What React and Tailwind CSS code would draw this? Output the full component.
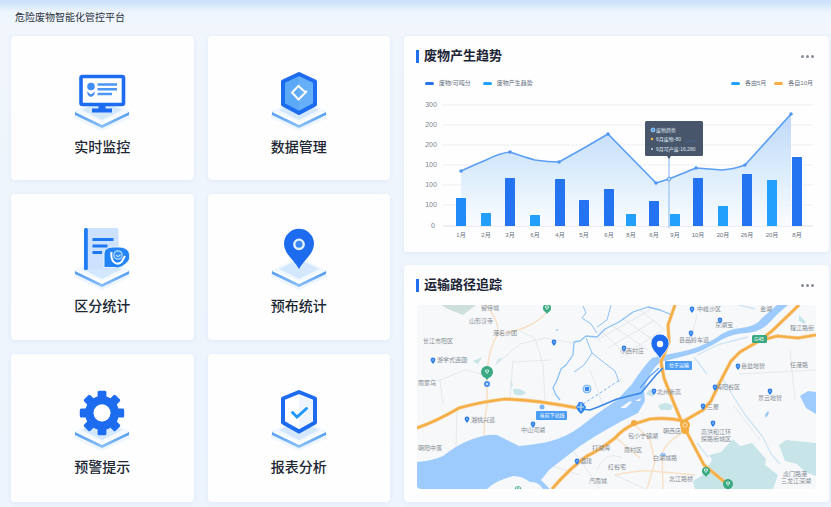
import React from "react";

const Platform = () => (
    <g>
        <path d="M4 44 L32 34 L60 44 V49 L32 62 L4 49 Z" fill="#edf6ff" />
        <path d="M5 43 L32 30 L59 43 V46 L32 59 L5 46 Z" fill="url(#edge)" />
        <path d="M5 43 L32 30 L59 43 L32 56 Z" fill="#ffffff" />
        <path d="M5 42 L32 29 L59 42 L32 53 Z" fill="#f1f8ff" />
        <path d="M12 41 L32 31 L52 41 L32 51 Z" fill="#d3e8fd" />
    </g>
);

const MonitorIcon = () => (
    <g>
        <rect x="11" y="7.5" width="42.5" height="28" rx="1.5" fill="#fff" stroke="#1d6cf0" strokeWidth="3.6" />
        <path d="M28.5 36 H35.5 V39.5 H42 V43.5 H22 V39.5 H28.5 Z" fill="#1d6cf0" />
        <circle cx="21" cy="17.5" r="3.8" fill="#3f8df5" />
        <path d="M17 22.5 L21 25.5 L25 22.5 Q24.5 27 21 28 Q17.5 27 17 22.5 Z" fill="#3f8df5" />
        <path d="M27.5 15.5 H47 M27.5 20.3 H47 M27.5 25 H42" stroke="#4c97f6" strokeWidth="2.4" />
    </g>
);

const HexagonIcon = () => (
    <g>
        <path d="M32 5 L48 12.5 V35.5 L32 44 L16 35.5 V12.5 Z" fill="#5ca9f8" stroke="#1d6cf0" strokeWidth="4" strokeLinejoin="round" />
        <path d="M32 7 L46 14 V34 L32 41.5 Z" fill="#78bafb" opacity=".35" />
        <path d="M31.5 17 L38.5 23.5 L31.5 30.5 L25 23.5 Z" fill="none" stroke="#fff" strokeWidth="2" />
        <path d="M38 23.5 L40 22" stroke="#fff" strokeWidth="2" />
    </g>
);

const ReportIcon = () => (
    <g>
        <path d="M16 0 H46.5 Q48.5 0 48.5 2 V41.5 H16 Z" fill="#cbe1fd" />
        <rect x="14" y="0" width="3.8" height="42" rx="1.5" fill="#1f7cf3" />
        <path d="M22.5 11.5 H43.5 M22.5 18 H37.5 M22.5 24.5 H32" stroke="#1f78f2" strokeWidth="2.8" />
        <path d="M34 39.5 V25 Q35 19 43 19 H50 Q58.5 20 59.5 26 V31 Q58 35 52 38.5 L48 40 L44 39.5 Z" fill="#2183f5" stroke="#e6f2ff" strokeWidth="1" />
        <path d="M41.5 24 Q40.5 31 44.5 34.5 Q48 37 51.5 34 L55 28" fill="none" stroke="#fff" strokeWidth="2" />
        <circle cx="48" cy="27" r="4.2" fill="#2f90f7" stroke="#bddcff" strokeWidth="1.2" />
        <path d="M46 27 Q48 30 50.5 26.5" fill="none" stroke="#cfe5ff" strokeWidth="1.2" />
    </g>
);

const PinIcon = () => (
    <g>
        <path d="M32 41 C28 33 17 26 17 15.8 A15 15 0 0 1 47 15.8 C47 26 36 33 32 41 Z" fill="#1d6cf0" />
        <circle cx="32" cy="16.3" r="4.7" fill="#3b8af6" stroke="#e4f1ff" strokeWidth="2.4" />
    </g>
);

const GearIcon = () => (
    <g fill="#1d6cf0">
        {[0, 45, 90, 135, 180, 225, 270, 315].map((angle) => (
            <rect key={angle} x="27.6" y="1.8" width="8.8" height="10" rx="1.5" transform={`rotate(${angle} 32 24)`} />
        ))}
        <circle cx="32" cy="24" r="12.7" fill="none" stroke="#1d6cf0" strokeWidth="8.6" />
        <circle cx="32" cy="24" r="8.4" fill="#ffffff" />
    </g>
);

const ShieldIcon = () => (
    <g>
        <path d="M32 3 L48 9.5 V33.5 L32 42.5 L16 33.5 V9.5 Z" fill="#ffffff" stroke="#1d6cf0" strokeWidth="4" strokeLinejoin="round" />
        <path d="M32 6 L46 11.5 V32 L32 40 Z" fill="#eef5fe" />
        <path d="M25.5 23.5 L30 28 L39.5 19.5" fill="none" stroke="#1f97fb" strokeWidth="3" strokeLinecap="round" />
    </g>
);

const modules = [
    { title: "实时监控", Icon: MonitorIcon },
    { title: "数据管理", Icon: HexagonIcon },
    { title: "区分统计", Icon: ReportIcon },
    { title: "预布统计", Icon: PinIcon },
    { title: "预警提示", Icon: GearIcon },
    { title: "报表分析", Icon: ShieldIcon },
];

const DARK = "#2474f2";
const LIGHT = "#22a0fc";

const bars = [
    { x: 461, top: 198, label: "1月", color: "#218cf8" },
    { x: 486, top: 213, label: "2月", color: LIGHT },
    { x: 510, top: 178, label: "3月", color: DARK },
    { x: 535, top: 215, label: "6月", color: LIGHT },
    { x: 560, top: 179, label: "4月", color: DARK },
    { x: 584, top: 200, label: "5月", color: DARK },
    { x: 609, top: 189, label: "6月", color: DARK },
    { x: 631, top: 214, label: "8月", color: LIGHT },
    { x: 654, top: 201, label: "6月", color: DARK },
    { x: 675, top: 214, label: "9月", color: LIGHT },
    { x: 698, top: 178, label: "10月", color: DARK },
    { x: 723, top: 206, label: "20月", color: LIGHT },
    { x: 747, top: 174, label: "26月", color: DARK },
    { x: 772, top: 180, label: "20月", color: LIGHT },
    { x: 797, top: 157, label: "8月", color: DARK },
];

const axis = [
    { y: 105, label: "300" },
    { y: 125, label: "200" },
    { y: 145, label: "200" },
    { y: 165, label: "100" },
    { y: 185, label: "100" },
    { y: 205, label: "100" },
    { y: 226, label: "0" },
];

const trend = "M461 171 Q474 165 486 160 Q500 153 510 152 Q524 157 535 160 Q548 162 559 162 L584 148 L608 134 L656 183 L669 179 L696 168 Q710 169 722 170 Q735 169 745 165 L791 114";

const dots = [[461, 171], [510, 152], [559, 162], [608, 134], [656, 183], [696, 168], [745, 165], [791, 114]];

const TrendChart = () => (
    <svg viewBox="404 97 425 147" className="block h-auto w-full" role="img" aria-label="废物产生趋势">
        <defs>
            <linearGradient id="area" x1="0" y1="0" x2="0" y2="1">
                <stop offset="0" stopColor="#b9d4f8" />
                <stop offset="0.45" stopColor="#d3e8fb" />
                <stop offset="1" stopColor="#fafcff" />
            </linearGradient>
        </defs>
        {axis.map(({ y, label }) => (
            <g key={y}>
                <line x1="443" x2="813" y1={y} y2={y} stroke={label === "0" ? "#d9dee6" : "#e6eaf0"} strokeDasharray={label === "0" ? "none" : "3 1"} />
                <text x={label === "0" ? 433 : 431} y={y + 2} fontSize="7" textAnchor="middle" fill="#7c8490">{label}</text>
            </g>
        ))}
        <path d={`${trend} V226 H461 Z`} fill="url(#area)" opacity=".9" />
        <path d="M669 156 V228" stroke="#a6cdf8" strokeWidth="1.5" />
        <path d={trend} fill="none" stroke="#5b9ff2" strokeWidth="1.7" strokeLinejoin="round" />
        {dots.map(([x, y]) => (
            <circle key={x} cx={x} cy={y} r="1.8" fill="#5497ef" />
        ))}
        <circle cx="669" cy="179" r="1.8" fill="#cfe4fc" stroke="#5b9ff2" />
        {bars.map(({ x, top, label, color }) => (
            <g key={x}>
                <rect x={x - 5} y={top} width="10" height={226 - top} rx="0.5" fill={color} />
                <text x={x} y="237" fontSize="6" textAnchor="middle" fill="#68717e">{label}</text>
            </g>
        ))}
        <rect x="645" y="121" width="58" height="35" rx="1.5" fill="#48566b" />
        <circle cx="653" cy="130" r="2" fill="#48a4f7" stroke="#d9edff" strokeWidth=".6" />
        <circle cx="652" cy="139" r="1.3" fill="#f5b04a" />
        <circle cx="652" cy="149" r="1" fill="#cbd5e1" />
        <path d="M686 142 q5 -2 11 0" fill="none" stroke="#3e83d8" strokeDasharray="1 2" />
        <g fill="#dde4ee" fontSize="5">
            <text x="656" y="132">废物趋势</text>
            <text x="656" y="141">6月废物-80</text>
            <text x="656" y="151">9月可产废:16,280</text>
        </g>
        <path d="M667 156 H671 L669 159 Z" fill="#48566b" />
    </svg>
);

const places = [
    [481, 310, "留侍城"],
    [469, 323, "山形汉寺"],
    [493, 335, "港名沙团"],
    [423, 343, "长江市阳区"],
    [437, 362, "游学式连园"],
    [418, 385, "南家乌"],
    [471, 422, "湘桃兴道"],
    [521, 432, "中山河湖"],
    [418, 450, "朝阳中落"],
    [592, 450, "打湖海"],
    [580, 463, "酒建"],
    [589, 483, "汽南城"],
    [608, 469, "红谷宅"],
    [697, 311, "中峰沙区"],
    [760, 311, "金湖"],
    [715, 327, "东湖宝"],
    [679, 342, "县品岭车道"],
    [620, 353, "小西村庄"],
    [790, 330, "程江路街"],
    [741, 368, "嘉益地智"],
    [790, 367, "任港路"],
    [657, 394, "北州新高"],
    [716, 389, "海阳谷区"],
    [707, 409, "三屋"],
    [758, 400, "景云地智"],
    [628, 438, "包小宁镇湖"],
    [663, 433, "朝西店"],
    [701, 434, "高洪和江环"],
    [701, 441, "探路街城区"],
    [624, 452, "南村区"],
    [653, 460, "白湖城路"],
    [669, 481, "北江路桥"],
    [783, 476, "虎门路港"],
    [781, 483, "三龙江深湖"],
];

const markers = [[433, 360], [554, 342], [467, 419], [533, 424], [577, 461], [692, 309], [720, 320], [691, 333], [624, 348], [738, 366], [654, 391], [715, 387], [703, 406], [770, 391], [713, 423]];

const RouteMap = () => (
    <svg viewBox="417 305 399 184" className="block h-auto w-full rounded" role="img" aria-label="运输路径追踪">
        <rect x="417" y="305" width="399" height="184" fill="#f6f8fa" />
        {/* lakes and parks */}
        <g fill="#c7e5e9">
            <path d="M695 489 L693 481 L703 475 L712 460 L709 455 L721 452 L733 439 L740 446 L752 443 L766 459 L765 465 L778 475 L773 489 Z" />
            <path d="M779 445 L786 440 L816 443 V476 L805 472 L797 464 L785 461 Z" />
            <path d="M441 305 H476 L463 315 L448 309 Z" fill="#cddfdd" />
            <path d="M473 361 L482 357 L478 364 Z M463 356 L468 360 L464 361 Z M646 394 q4 -7 9 -3 l-2 6 z M658 406 q7 -6 15 0 l-2 4 h-10 z M496 363 q2 -5 7 -5 l-7 7 z" />
            <path d="M513 389 q8 -1 13 4 q-6 4 -12 1 z M510 381 l3 3 -2 6 z M799 315 l7 7 -2 2 -5 -3 z" />
        </g>
        {/* minor roads */}
        <g fill="none" stroke="#e5e8ec" strokeWidth="1">
            <path d="M417 381 L440 380 L465 370 L487 375 M440 380 L443 405 M457 410 L456 447 M495 365 L520 344 L545 338 L573 343 M513 360 L510 399 M520 331 L535 338 L543 365 L545 400 M513 362 L550 360" />
            <path d="M597 340 L650 310 M600 330 L630 358 M611 325 L648 350 M622 318 L660 345 M640 310 L665 330 M608 348 L655 320 M620 358 L662 330" />
            <path d="M560 435 L580 460 L600 489 M546 464 L580 475 M597 470 Q605 450 622 458 M697 315 L690 345 M739 374 L816 370 M790 350 L795 400 M615 475 L645 489 M733 405 L760 440 M590 370 L605 410" />
        </g>
        <g fill="none" stroke="#f8e1c6" strokeWidth="1.5">
            <path d="M486 305 Q499 320 498 334 Q489 347 487 372 V405 Q484 420 484 438" />
            <path d="M498 334 Q520 331 530 325 Q540 320 547 312" />
            <path d="M635 425 L650 440 L655 462 L647 489 M682 433 Q665 443 662 454 L663 489 M615 475 Q640 470 652 471 L695 475 M615 437 L640 458" />
        </g>
        {/* rivers */}
        <path d="M417 462 Q432 461 443 456 Q457 445 470 440 Q486 434 497 435 Q507 440 519 446 Q540 444 551 441 Q566 437 580 427 Q596 414 617 400 L632 384 Q643 367 652 358 Q664 355 680 352 Q700 348 716 338 Q727 329 741 328 Q757 326 762 318 L777 305 H788 Q777 314 770 322 Q761 332 747 333 Q734 333 721 340 Q702 352 688 355 Q674 359 660 362 Q648 373 644 390 L645 401 L638 413 L620 422 Q598 434 580 446 Q563 459 549 470 L541 480 L550 489 H543 Q538 481 530 482 Q522 476 514 476 Q496 480 487 489 H417 Z" fill="#9dcbfd" />
        <path d="M800 396 L808 391 L816 392 V414 L806 408 Z" fill="#9dcbfd" />
        <path d="M620 408 L630 401 L632 402 L626 408 Z M635 401 L641 398 L640 401 Z" fill="#f3f8fd" />
        <g fill="none" stroke="#8cc0f4" strokeWidth="1.3" strokeLinejoin="round">
            <path d="M672 315 L660 310 L648 307 L633 312 L619 322 L605 329 L597 337 L586 336 L580 341 L574 342 L573 355 L566 365 L561 369 L557 380 L553 388 L556 395 L560 400" />
            <path d="M583 306 L586 313 L582 318 L591 324 L597 333 M597 327 L607 320 L611 305 M586 338 L592 353 L602 361 L615 371 L619 382 M592 353 L584 365 L574 372" strokeWidth="1" />
        </g>
        <path d="M723 379 L735 399 L746 416 L763 437 L771 454 L780 464 M694 357 L707 374 M697 355 L720 344 L748 337 M697 443 L708 457 M739 305 L755 309" fill="none" stroke="#cfe4f5" strokeWidth="1.3" />
        <path d="M765 415 l3 -4 1 2 -3 5 z M555 330 l4 -1 -2 2 z M661 453 h4 l1 3 h-6 z" fill="#94c5f8" />
        {/* highways */}
        <g fill="none" stroke="#f8c888" strokeWidth="3.6" strokeLinejoin="round">
            <path d="M417 428 Q437 421 459 408 Q480 402 505 399 Q535 400 578 408" />
            <path d="M675 305 L668 325 L669 342 L661 362 L664 378 L673 401 L683 425 L704 465 L727 484" />
            <path d="M799 305 L772 331 L759 341 L740 352 L731 361 L720 382 L711 401 L703 410 L684 421 Q668 417 650 419 L634 424 Q623 429 615 438 Q600 450 587 456 Q570 468 552 489 M759 341 L777 336 L798 338 L816 335" />
        </g>
        <g fill="none" stroke="#f4ae43" strokeWidth="2.2" strokeLinejoin="round">
            <path d="M417 428 Q437 421 459 408 Q480 402 505 399 Q535 400 578 408" />
            <path d="M675 305 L668 325 L669 342 L661 362 L664 378 L673 401 L683 425 L704 465 L727 484" />
            <path d="M799 305 L772 331 L759 341 L740 352 L731 361 L720 382 L711 401 L703 410 L684 421 Q668 417 650 419 L634 424 Q623 429 615 438 Q600 450 587 456 Q570 468 552 489 M759 341 L777 336 L798 338 L816 335" />
        </g>
        <circle cx="634" cy="423" r="3" fill="#f3ab40" />
        <circle cx="685" cy="425" r="5" fill="#f3ab40" />
        <circle cx="685" cy="430" r="4" fill="#f3ab40" />
        <circle cx="685" cy="425" r="2.2" fill="none" stroke="#fde2b5" />
        {/* transport route */}
        <path d="M581 409 L590 410 L598 407 L617 399 L641 393 L656 375 L663 368" fill="none" stroke="#3b86ea" strokeWidth="1.6" />
        <path d="M640 388 L650 376 L659 368" fill="none" stroke="#5b9ff2" strokeWidth="1.2" />
        <path d="M583 404 L600 393 L621 379" fill="none" stroke="#7db6f4" strokeDasharray="3 2" />
        <circle cx="587" cy="389" r="4" fill="#c5e0fc" stroke="#79b5f5" />
        <path d="M585 391 V387 H589 V391 Z" fill="#3b8bef" />
        <path d="M576 407 l3 -5 h3 l4 5 -2 4 -3 3 -3 -3 z" fill="#2f86ef" />
        <path d="M577 407 h7 M581 403 v8" stroke="#d9ebff" />
        <circle cx="487" cy="384" r="3" fill="#4892ee" />
        <circle cx="487" cy="384" r="1" fill="#e4f1ff" />
        <circle cx="542" cy="407" r="2.5" fill="#79b5f5" />
        {markers.map(([x, y]) => (
            <g key={`${x}-${y}`}>
                <path d={`M${x - 2.4} ${y} a2.4 2.4 0 1 1 4.8 0 q-.5 2 -2.4 4 q-1.9 -2 -2.4 -4 Z`} fill="#2f7fea" />
                <circle cx={x} cy={y} r=".7" fill="#bfdcff" />
            </g>
        ))}
        {[[547, 308, 4], [487, 372, 6], [706, 471, 4], [728, 484, 5], [518, 489, 3]].map(([x, y, r]) => (
            <g key={x}>
                <path d={`M${x - r + 1} ${y + 2} L${x} ${y + r + 2} L${x + r - 1} ${y + 2} Z`} fill="#3aa981" />
                <circle cx={x} cy={y} r={r} fill="#3aa981" />
                <path d={`M${x - 1.5} ${y - 2} h3 v2 h-3 z M${x} ${y} v2`} fill="none" stroke="#e1f7ee" strokeWidth=".8" />
            </g>
        ))}
        <g fill="#868d96" fontSize="6">
            {places.map(([x, y, name]) => (
                <text key={`${x}-${y}`} x={x} y={y}>{name}</text>
            ))}
        </g>
        <rect x="752" y="335" width="15" height="8" rx="1.5" fill="#3aa981" />
        <rect x="536" y="411" width="31" height="9" rx="1" fill="#4a9cf4" />
        <rect x="665" y="361" width="27" height="9" rx="1" fill="#4a9cf4" />
        <g fill="#ffffff" fontSize="5" textAnchor="middle">
            <text x="759" y="341">G45</text>
            <text x="552" y="417">当前下站线</text>
            <text x="679" y="367">位于运输</text>
        </g>
        <path d="M660 359 C657 353 651 350 651 343 A9 9 0 0 1 669 343 C669 350 663 353 660 359 Z" fill="#1d6cf0" stroke="#eef6ff" strokeWidth=".8" />
        <circle cx="660" cy="344" r="3.2" fill="#ffffff" />
    </svg>
);

const PanelHeader = ({ title }) => (
    <div className="flex items-center justify-between pr-[13px] pl-3">
        <h2 className="flex items-center gap-[5px] text-[13px] leading-5 font-bold text-[#1c2536]">
            <span className="h-[13px] w-[3px] bg-[#1f6ff0]" />
            {title}
        </h2>
        <button type="button" aria-label="更多" className="flex h-4 items-center gap-0.5 px-0.5">
            <span className="size-[3px] rounded-full bg-[#858c96]" />
            <span className="size-[3px] rounded-full bg-[#858c96]" />
            <span className="size-[3px] rounded-full bg-[#858c96]" />
        </button>
    </div>
);

const Legend = ({ color, children }) => (
    <span className="flex items-center gap-[5px]">
        <span className={`h-[3px] w-[9px] rounded-xs ${color}`} />
        {children}
    </span>
);

const App = () => {
    return (
        <div className="flex min-h-screen flex-col bg-[linear-gradient(#cbe0f9_0px,#cfe3fa_3px,#eef5fd_12px,#f1f6fc_30px,#edf4fd_100%)] pr-0.5 pb-[5px] pl-[11px] font-['Liberation_Sans','Noto_Sans_CJK_SC',sans-serif]">
            <svg className="absolute size-0" aria-hidden="true">
                <defs>
                    <linearGradient id="edge" x1="0" y1="0" x2="1" y2="0">
                        <stop offset="0" stopColor="#5a9ff0" />
                        <stop offset="0.5" stopColor="#86bdf8" />
                        <stop offset="1" stopColor="#5a9ff0" />
                    </linearGradient>
                </defs>
            </svg>
            <header className="px-1 pt-2 pb-2">
                <h1 className="text-[10px] leading-5 text-[#2a3240]">危险废物智能化管控平台</h1>
            </header>
            <main className="grid grow grid-cols-[379fr_425fr] gap-[14px]">
                <nav className="grid grid-cols-2 grid-rows-[144fr_147fr_148fr] gap-[14px]">
                    {modules.map(({ title, Icon }) => (
                        <button
                            key={title}
                            type="button"
                            className="flex flex-col items-center justify-center gap-1 rounded bg-[#fefefe] pt-[10px] shadow-[0_1px_5px_#dce8f8]"
                        >
                            <svg viewBox="0 0 64 64" className="size-16" aria-hidden="true">
                                <Platform />
                                <Icon />
                            </svg>
                            <span className="text-[14px] leading-5 font-medium text-[#202733]">{title}</span>
                        </button>
                    ))}
                </nav>
                <div className="flex flex-col gap-[13px]">
                    <section className="rounded bg-[#fefefe] pt-[10px] pb-2 shadow-[0_1px_5px_#dce8f8]">
                        <PanelHeader title="废物产生趋势" />
                        <div className="flex justify-between pt-3 pr-4 pb-2 pl-[21px] text-[6px] leading-[11px] text-[#667080]">
                            <div className="flex gap-3">
                                <Legend color="bg-[#2474f2]">废物/可吨分</Legend>
                                <Legend color="bg-[#22a0fc]">废物产生趋势</Legend>
                            </div>
                            <div className="flex gap-2">
                                <Legend color="bg-[#22a0fc]">各由5月</Legend>
                                <Legend color="bg-[#f4ae43]">各自10月</Legend>
                            </div>
                        </div>
                        <TrendChart />
                    </section>
                    <section className="grow rounded bg-[#fefefe] pt-[10px] pb-[13px] shadow-[0_1px_5px_#dce8f8]">
                        <PanelHeader title="运输路径追踪" />
                        <div className="px-[13px] pt-[10px]">
                            <RouteMap />
                        </div>
                    </section>
                </div>
            </main>
        </div>
    );
};

export default App;
